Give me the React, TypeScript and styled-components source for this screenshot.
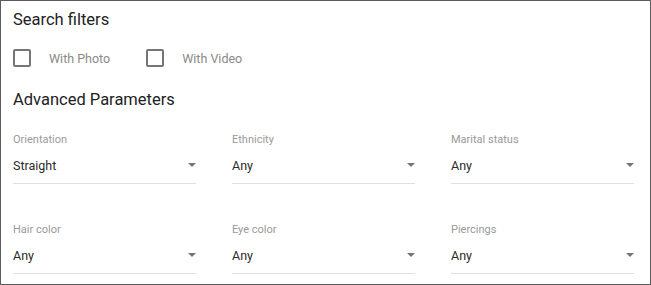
import styled, { createGlobalStyle } from "styled-components";

const GlobalStyle = createGlobalStyle`
  html, body {
    margin: 0;
    padding: 0;
    background: #fff;
  }
  body {
    font-family: Roboto, "Liberation Sans", sans-serif;
  }
`;

interface Field {
  label: string;
  value: string;
}

const fields: Field[] = [
  { label: "Orientation", value: "Straight" },
  { label: "Ethnicity", value: "Any" },
  { label: "Marital status", value: "Any" },
  { label: "Hair color", value: "Any" },
  { label: "Eye color", value: "Any" },
  { label: "Piercings", value: "Any" },
];

const App = () => {
  return (
    <>
      <GlobalStyle />
      <Panel>
        <Heading>Search filters</Heading>
        <CheckRow>
          <Check>
            <Box />
            <CheckLabel>With Photo</CheckLabel>
          </Check>
          <Check>
            <Box />
            <CheckLabel>With Video</CheckLabel>
          </Check>
        </CheckRow>
        <Heading>Advanced Parameters</Heading>
        <Grid>
          {fields.map((f) => (
            <SelectField key={f.label}>
              <FieldLabel>{f.label}</FieldLabel>
              <SelectBox>
                <Value>{f.value}</Value>
                <Arrow />
              </SelectBox>
            </SelectField>
          ))}
        </Grid>
      </Panel>
    </>
  );
};

export default App;

const Panel = styled.div`
  box-sizing: border-box;
  width: 651px;
  height: 285px;
  border: 1px solid #5c5c5c;
  padding: 7px 16px 0 12px;
  overflow: hidden;
`;

const Heading = styled.div`
  font-size: 16.5px;
  line-height: 24px;
  color: #222;
`;

const CheckRow = styled.div`
  display: flex;
  gap: 36px;
  margin: 17px 0 21px;
`;

const Check = styled.label`
  display: flex;
  align-items: center;
  gap: 18px;
`;

const Box = styled.span`
  box-sizing: border-box;
  width: 18px;
  height: 18px;
  border: 2px solid #767676;
  border-radius: 2px;
`;

const CheckLabel = styled.span`
  font-size: 12.5px;
  color: #8a8a8a;
`;

const Grid = styled.div`
  display: grid;
  grid-template-columns: repeat(3, 183px);
  column-gap: 36px;
  row-gap: 39px;
  margin-top: 21px;
`;

const SelectField = styled.div`
  display: flex;
  flex-direction: column;
`;

const FieldLabel = styled.div`
  font-size: 11px;
  line-height: 14px;
  color: #9a9a9a;
`;

const SelectBox = styled.div`
  display: flex;
  align-items: center;
  justify-content: space-between;
  height: 36px;
  border-bottom: 1px solid #e0e0e0;
`;

const Value = styled.span`
  font-size: 12.5px;
  color: #2b2b2b;
`;

const Arrow = styled.span`
  width: 0;
  height: 0;
  border-left: 4px solid transparent;
  border-right: 4px solid transparent;
  border-top: 4px solid #757575;
`;
